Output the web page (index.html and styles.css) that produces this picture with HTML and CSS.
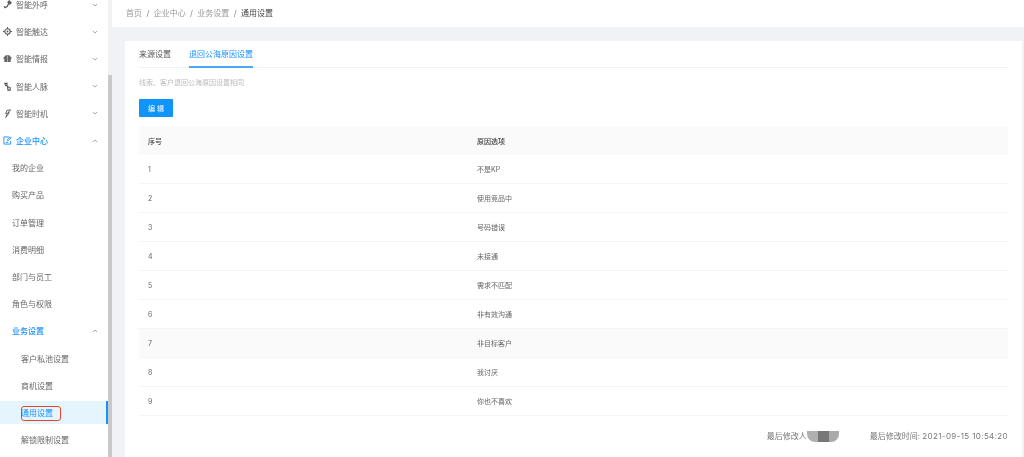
FILE: index.html
```html
<!DOCTYPE html>
<html lang="zh">
<head>
<meta charset="utf-8">
<title>通用设置</title>
<link rel="stylesheet" href="styles.css">
</head>
<body>
<div class="app">
  <aside class="side">
    <nav class="menu">
      <div class="item"><svg class="ico" viewBox="0 0 10 10"><path d="M1.500 8.500c2.500 0 3.500-1 4-3s1-2.500 2.500-3M7 1l2 2-1.500 1.500-2-2zM1 7l2 2" fill="none" stroke="#555" stroke-width="1.300"/></svg><span class="lbl">智能外呼</span><svg class="car" viewBox="0 0 8 5"><path d="M1 1l3 3 3-3" fill="none" stroke="#888"/></svg></div>
      <div class="item"><svg class="ico" viewBox="0 0 10 10"><circle cx="5" cy="5" r="3" fill="none" stroke="#555" stroke-width="1.200"/><circle cx="5" cy="5" r="1" fill="#555"/><path d="M5 0v2M5 8v2M0 5h2M8 5h2" stroke="#555"/></svg><span class="lbl">智能触达</span><svg class="car" viewBox="0 0 8 5"><path d="M1 1l3 3 3-3" fill="none" stroke="#888"/></svg></div>
      <div class="item"><svg class="ico" viewBox="0 0 10 10"><path d="M3 1.500h4L9.800 4.500 8.500 6v3H1.500V6L.2 4.500z" fill="#666"/><path d="M5 2v7" stroke="#fff" stroke-width=".5"/></svg><span class="lbl">智能情报</span><svg class="car" viewBox="0 0 8 5"><path d="M1 1l3 3 3-3" fill="none" stroke="#888"/></svg></div>
      <div class="item"><svg class="ico" viewBox="0 0 10 10"><path d="M2 1.500h2.500v2.500H3zM5 5l3 1.500V9H5.500z" fill="none" stroke="#555" stroke-width="1.200"/></svg><span class="lbl">智能人脉</span><svg class="car" viewBox="0 0 8 5"><path d="M1 1l3 3 3-3" fill="none" stroke="#888"/></svg></div>
      <div class="item"><svg class="ico" viewBox="0 0 10 10"><path d="M8.500 1L4.500 1.500 3 5h2L3 9.500l4-5.500H5.500z" fill="none" stroke="#555"/></svg><span class="lbl">智能时机</span><svg class="car" viewBox="0 0 8 5"><path d="M1 1l3 3 3-3" fill="none" stroke="#888"/></svg></div>
      <div class="item on"><svg class="ico" viewBox="0 0 10 10"><path d="M8.500 5.500v3.500h-7.500v-8h5.500M3 7h3M8 1l1 1-3 3H5V4z" fill="none" stroke="#1890ff" stroke-width="1"/></svg><span class="lbl">企业中心</span><svg class="car" viewBox="0 0 8 5"><path d="M1 4l3-3 3 3" fill="none" stroke="#888"/></svg></div>
      <div class="sub1">我的企业</div>
      <div class="sub1">购买产品</div>
      <div class="sub1">订单管理</div>
      <div class="sub1">消费明细</div>
      <div class="sub1">部门与员工</div>
      <div class="sub1">角色与权限</div>
      <div class="sub1 open"><span class="lbl">业务设置</span><svg class="car" viewBox="0 0 8 5"><path d="M1 4l3-3 3 3" fill="none" stroke="#888"/></svg></div>
      <div class="sub2">客户私池设置</div>
      <div class="sub2">商机设置</div>
      <div class="sub2 cur"><span class="mark">通用设置</span></div>
      <div class="sub2">解锁限制设置</div>
    </nav>
    <div class="bar"><div class="thumb"></div></div>
  </aside>
  <main class="main">
    <header class="crumbs">
      <span>首页</span><i>/</i><span>企业中心</span><i>/</i><span>业务设置</span><i>/</i><span class="now">通用设置</span>
    </header>
    <section class="card">
      <div class="tabs"><span class="tab">来源设置</span><span class="tab act">退回公海原因设置</span></div>
      <p class="tip">线索、客户退回公海原因设置相同</p>
      <button class="btn">编 辑</button>
      <div class="table">
        <div class="row head"><span>序号</span><span>原因选项</span></div>
        <div class="row"><span>1</span><span>不是KP</span></div>
        <div class="row"><span>2</span><span>使用竞品中</span></div>
        <div class="row"><span>3</span><span>号码错误</span></div>
        <div class="row"><span>4</span><span>未接通</span></div>
        <div class="row"><span>5</span><span>需求不匹配</span></div>
        <div class="row"><span>6</span><span>非有效沟通</span></div>
        <div class="row hover"><span>7</span><span>非目标客户</span></div>
        <div class="row"><span>8</span><span>我讨厌</span></div>
        <div class="row"><span>9</span><span>你也不喜欢</span></div>
      </div>
      <div class="foot">
        <span class="who">最后修改人<b class="blur"></b></span>
        <span>最后修改时间: <span class="stamp">2021-09-15 10:54:20</span></span>
      </div>
    </section>
  </main>
</div>
</body>
</html>
```
FILE: styles.css
```css
* { box-sizing: border-box; }
html, body { margin: 0; height: 100%; overflow: hidden; }
body { font-family: "Inter", "Noto Sans CJK SC", "Noto Sans", sans-serif; font-size: 8px; color: #666; background: #f0f2f5; }
.app { display: flex; height: 457px; overflow: hidden; filter: blur(.3px); will-change: transform; }
.side { width: 112px; flex: none; display: flex; background: #f0f2f5; height: 457px; overflow: hidden; }
.menu { width: 108px; flex: none; margin-top: -9px; background: #fff; }
.bar { width: 4px; background: #f1f1f1; padding-top: 75px; }
.thumb { height: 382px; background: #c9c9c9; }
.item, .sub1, .sub2 { height: 27.2px; display: flex; align-items: center; font-size: 8px; color: #666; }
.item { padding: 0 10px 0 3px; }
.ico { width: 9px; height: 9px; margin-right: 4px; flex: none; }
.lbl { flex: 1; }
.car { width: 6px; height: 4px; flex: none; }
.on { color: #1890ff; font-weight: 500; }
.sub1 { padding: 0 10px 0 12px; }
.open { color: #1890ff; font-weight: 500; }
.sub2 { padding-left: 21px; }
.cur { background: #e4f5fe; border-right: 2px solid #1890ff; color: #1890ff; height: 23px; margin-top: 2px; margin-bottom: 2px; }
.mark { position: relative; }
.mark::after { content: ""; position: absolute; left: 0; right: -8px; top: -1px; bottom: -3px; border: 1.500px solid #e8432e; border-radius: 3px; }
.main { flex: 1; min-width: 0; display: flex; flex-direction: column; }
.crumbs { height: 27px; background: #fff; display: flex; align-items: center; gap: 3.400px; padding: 0 0 2px 14px; color: #999; font-size: 8px; flex: none; }
.crumbs i { font-style: normal; color: #888; margin: 0 1px; }
.now { color: #444; }
.card { background: #fff; margin: 14px 2px 0 13px; padding: 0 14px; flex: 1; }
.tabs { display: flex; gap: 18px; height: 27px; border-bottom: 1px solid #f2f2f2; align-items: center; font-size: 8px; color: #555; }
.tab { height: 27px; line-height: 27px; }
.act { color: #1890ff; border-bottom: 2px solid #4aa8ff; }
.tip { margin: 10px 0 0; font-size: 7px; color: #bbb; line-height: 10px; }
.btn { display: block; width: 34px; height: 18px; margin-top: 11px; padding: 0; background: #0f94fb; color: #fff; border: 0; border-radius: 1px; font: inherit; font-size: 7px; }
.table { margin-top: 9px; }
.row { display: grid; grid-template-columns: 329px 1fr; height: 29px; align-items: center; padding-left: 9px; border-bottom: 1px solid #f5f5f5; font-size: 7px; color: #666; }
.head { background: #fafafa; color: #444; font-weight: 500; border: 0; }
.hover { background: #fafafa; }
.foot { display: flex; justify-content: flex-end; gap: 31px; margin-top: 14px; font-size: 8px; color: #777; line-height: 12px; }
.stamp { letter-spacing: .37px; }
.who { display: flex; align-items: center; }
.blur { display: block; width: 32px; height: 11px; border-radius: 0 0 8px 8px; background: linear-gradient(90deg, #b0b0b0 0 34%, #777 34% 68%, #aaa 68%); }
```
